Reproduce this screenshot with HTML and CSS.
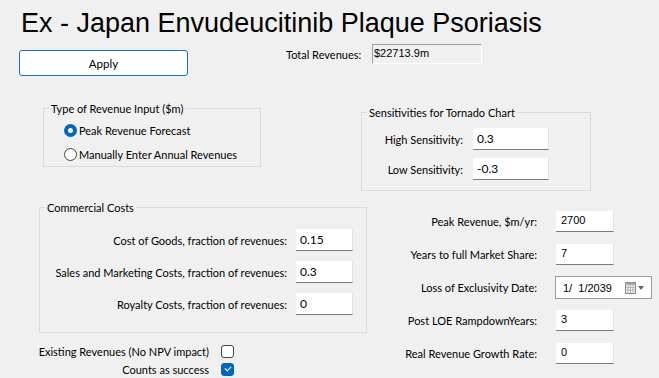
FILE: index.html
```html
<!DOCTYPE html>
<html lang="en">
<head>
    <meta charset="UTF-8">
    <meta name="viewport" content="width=device-width, initial-scale=1.0">
    <title>Revenue Inputs</title>
    <link rel="stylesheet" href="styles.css">
</head>
<body>
    <h1 class="title">Ex - Japan Envudeucitinib Plaque Psoriasis</h1>

    <div class="top-row">
        <button class="apply-btn" type="button">Apply</button>
        <div class="total">
            <span class="total-label">Total Revenues:</span>
            <span class="total-box">$22713.9m</span>
        </div>
    </div>

    <div class="row-a">
        <fieldset class="group revenue-type">
            <legend>Type of Revenue Input ($m)</legend>
            <label class="radio-row"><input type="radio" name="revtype" checked>Peak Revenue Forecast</label>
            <label class="radio-row"><input type="radio" name="revtype">Manually Enter Annual Revenues</label>
        </fieldset>

        <fieldset class="group sensitivities">
            <legend>Sensitivities for Tornado Chart</legend>
            <div class="field-grid">
                <label for="high">High Sensitivity:</label>
                <input class="text-input" id="high" type="text" value="0.3">
                <label for="low">Low Sensitivity:</label>
                <input class="text-input" id="low" type="text" value="-0.3">
            </div>
        </fieldset>
    </div>

    <div class="row-b">
        <div class="left-col">
            <fieldset class="group commercial">
                <legend>Commercial Costs</legend>
                <div class="field-grid">
                    <label for="cogs">Cost of Goods, fraction of revenues:</label>
                    <input class="text-input" id="cogs" type="text" value="0.15">
                    <label for="sales">Sales and Marketing Costs, fraction of revenues:</label>
                    <input class="text-input" id="sales" type="text" value="0.3">
                    <label for="royalty">Royalty Costs, fraction of revenues:</label>
                    <input class="text-input" id="royalty" type="text" value="0">
                </div>
            </fieldset>

            <div class="checks">
                <label for="existing">Existing Revenues (No NPV impact)</label>
                <input type="checkbox" id="existing">
                <label for="success">Counts as success</label>
                <input type="checkbox" id="success" checked>
            </div>
        </div>

        <div class="right-col">
            <div class="field-row">
                <label for="peak">Peak Revenue, $m/yr:</label>
                <input class="text-input small" id="peak" type="text" value="2700">
            </div>
            <div class="field-row">
                <label for="years">Years to full Market Share:</label>
                <input class="text-input small" id="years" type="text" value="7">
            </div>
            <div class="field-row">
                <label>Loss of Exclusivity Date:</label>
                <div class="date-picker">
                    <span>1/&nbsp;&nbsp;1/2039</span>
                    <svg class="cal-icon" width="20" height="12" viewBox="0 0 20 12">
                        <rect x="0.5" y="0.5" width="10" height="11" fill="#f4f4f4" stroke="#8c8c8c"/>
                        <rect x="1" y="1" width="9" height="2" fill="#a8a8a8"/>
                        <path d="M3 3v8M5.5 3v8M8 3v8M1 5.5h9M1 8h9" stroke="#b4b4b4" stroke-width="1"/>
                        <path d="M13 4h6l-3 4z" fill="#4d6b8c"/>
                    </svg>
                </div>
            </div>
            <div class="field-row">
                <label for="post">Post LOE RampdownYears:</label>
                <input class="text-input small" id="post" type="text" value="3">
            </div>
            <div class="field-row">
                <label for="growth">Real Revenue Growth Rate:</label>
                <input class="text-input small" id="growth" type="text" value="0">
            </div>
        </div>
    </div>
</body>
</html>
```

FILE: styles.css
```css
* {
    box-sizing: border-box;
}
body {
    margin: 0;
    width: 659px;
    height: 378px;
    overflow: hidden;
    background-color: #f0f0f0;
    color: #000;
    font-family: 'Lato', 'Liberation Sans', sans-serif;
    font-size: 11px;
}
.title {
    margin: 6px 0 0 21px;
    font-family: 'Liberation Sans', sans-serif;
    font-size: 27px;
    font-weight: normal;
    line-height: 34px;
}

/* Fila superior */
.top-row {
    display: flex;
    align-items: flex-start;
    margin-top: 4px;
    padding-left: 19px;
    height: 32px;
}
.apply-btn {
    margin-top: 6px;
    width: 169px;
    height: 26px;
    background-color: #fff;
    border: 1px solid #1a6fc4;
    border-radius: 3px;
    font-family: inherit;
    font-size: 11.5px;
    color: #000;
}
.total {
    display: flex;
    align-items: center;
    margin-left: 98px;
    height: 20px;
}
.total-label {
    width: 86px;
}
.total-box {
    width: 110px;
    height: 20px;
    padding: 2px 0 0 1px;
    border-top: 1px solid #a0a0a0;
    border-left: 1px solid #a0a0a0;
    border-bottom: 1px solid #fff;
    border-right: 1px solid #fff;
    font-family: 'Liberation Sans', sans-serif;
    font-size: 11px;
}

/* Grupos */
.group {
    margin: 0;
    padding: 0;
    min-width: 0;
    border: 1px solid #dadada;
}
.group legend {
    margin-left: 5px;
    padding: 0 2px;
    line-height: 15px;
}
.row-a {
    display: flex;
    align-items: flex-start;
    margin-top: 25px;
    padding-left: 43px;
}
.revenue-type {
    width: 218px;
    padding-top: 2px;
}
.radio-row {
    display: flex;
    align-items: center;
    gap: 2px;
    height: 24px;
    margin-left: 20px;
}
.radio-row input {
    appearance: none;
    margin: 0;
    width: 13px;
    height: 13px;
    border: 1px solid #444;
    border-radius: 50%;
    background-color: #fff;
}
.radio-row input:checked {
    border: 4px solid #0067c0;
}
.sensitivities {
    margin-top: 4px;
    margin-left: 100px;
    width: 230px;
    padding: 8px 0 10px 0;
}
.sensitivities .field-grid {
    grid-template-columns: 101px 76px;
    column-gap: 10px;
    row-gap: 8px;
}
.field-grid {
    display: grid;
    align-items: center;
}
.field-grid label {
    justify-self: end;
    white-space: nowrap;
}
.text-input {
    height: 22px;
    padding: 0 4px;
    background-color: #fff;
    border: none;
    border-right: 1px solid #e4e4e4;
    border-bottom: 1px solid #7a7a7a;
    font-family: inherit;
    font-size: 12px;
    color: #000;
    outline: none;
}
.text-input.small {
    width: 58px;
    height: 21px;
    padding: 0 0 3px 5px;
    font-family: 'Liberation Sans', sans-serif;
    font-size: 11px;
}

/* Fila inferior */
.row-b {
    display: flex;
    align-items: flex-start;
    margin-top: 9px;
}
.left-col {
    width: 367px;
}
.commercial {
    margin-left: 39px;
    width: 328px;
    padding: 14px 0 17px 0;
}
.commercial .field-grid {
    grid-template-columns: 247px 57px;
    column-gap: 9px;
    row-gap: 10px;
}
.checks {
    display: grid;
    grid-template-columns: 209px 13px;
    grid-auto-rows: 18px;
    column-gap: 12px;
    align-items: center;
    margin-top: 9px;
}
.checks label {
    justify-self: end;
    white-space: nowrap;
}
.checks input {
    appearance: none;
    position: relative;
    margin: 0;
    width: 13px;
    height: 13px;
    border: 1px solid #444;
    border-radius: 3px;
    background-color: #fff;
}
.checks input:checked {
    background-color: #0067c0;
    border-color: #0067c0;
}
.checks input:checked::after {
    content: "";
    position: absolute;
    left: 3px;
    top: 2px;
    width: 5px;
    height: 3px;
    border-left: 1px solid #fff;
    border-bottom: 1px solid #fff;
    transform: rotate(-45deg);
}
.right-col {
    margin-top: 5px;
}
.field-row {
    display: grid;
    grid-template-columns: 170px auto;
    column-gap: 19px;
    align-items: center;
    height: 33px;
}
.field-row label {
    justify-self: end;
    white-space: nowrap;
}
.date-picker {
    display: flex;
    align-items: center;
    justify-content: space-between;
    margin-left: -1px;
    width: 97px;
    height: 23px;
    padding: 0 6px 0 7px;
    background-color: #fff;
    border: 1px solid #9a9a9a;
    font-family: 'Liberation Sans', sans-serif;
    font-size: 11px;
}
.cal-icon {
    display: block;
}
```
